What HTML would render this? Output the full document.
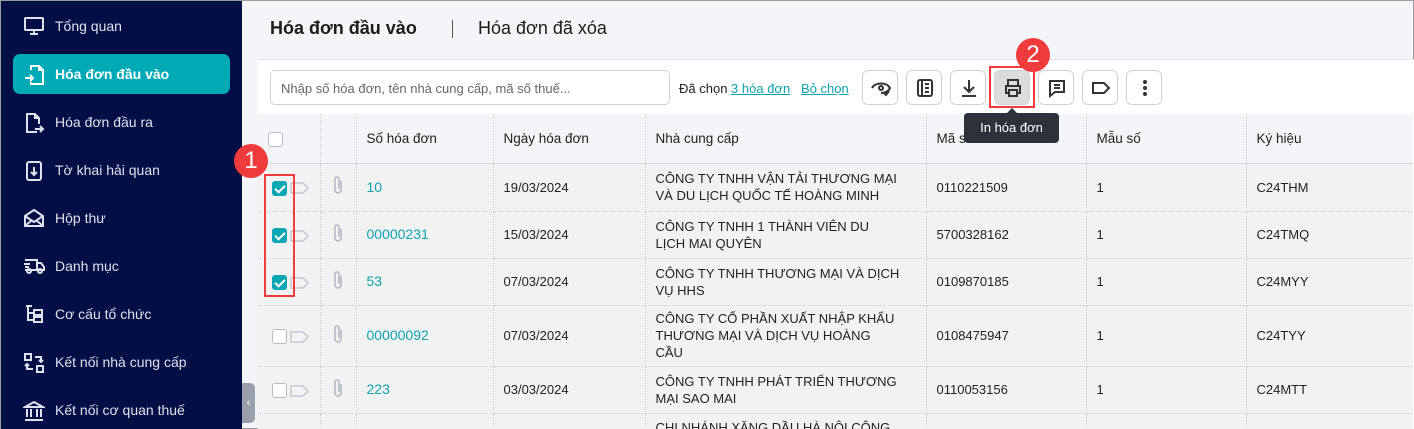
<!DOCTYPE html>
<html style="overflow:hidden"><head><meta charset="utf-8"><style>
*{box-sizing:border-box;margin:0;padding:0}
html,body{width:1414px;height:429px;overflow:hidden}
body{font-family:"Liberation Sans",sans-serif;background:#f4f5f8;position:relative;border:1px solid #9a9a9a}
.sb{position:absolute;left:0;top:0;width:241px;height:429px;background:#030d46}
.it{position:absolute;left:12px;width:217px;height:40px;color:#dfe2ec;font-size:14px;display:flex;align-items:center;padding-left:42px}
.it svg{position:absolute;left:10px;top:10px}
.it.act{background:#00a9b6;border-radius:7px;font-weight:bold;color:#fff}
.tab{position:absolute;top:17px;font-size:18px;color:#1c1c1c}
.card{position:absolute;left:257px;top:58px;width:1156px;height:371px;background:#fff;border-top:1px solid #e4e4e8}
.search{position:absolute;left:269px;top:69px;width:400px;height:35px;border:1px solid #cfd2d8;border-radius:5px;font-size:13px;color:#666;padding:10px 0 0 10px}
.btn{position:absolute;top:69px;width:36px;height:35px;border:1px solid #cfd2d8;border-radius:6px;background:#fff}
.btn svg{position:absolute;left:8px;top:7px}
table{position:absolute;left:257px;top:113px;border-collapse:collapse;font-size:13px;color:#222;table-layout:fixed;width:1155px}
td{border-right:1px dotted #c9cbd0;border-bottom:1px dotted #c9cbd0;padding:0 10px;vertical-align:middle;background:#f2f2f2;line-height:17px;overflow:hidden;white-space:nowrap}
tr.h td{background:#f4f5f8;height:49px;border-bottom:1px solid #d2d5dc;font-size:13.5px}
.lnk{color:#0fa2b0;font-size:14px}
.cb{display:inline-block;width:15px;height:15px;border:1.5px solid #b8bcc4;border-radius:3px;background:#fff;vertical-align:middle}
.cb.on{background:#0aa6b3;border-color:#0aa6b3;position:relative}
.cb.on:after{content:"";position:absolute;left:4px;top:1px;width:4px;height:8px;border:solid #fff;border-width:0 2px 2px 0;transform:rotate(45deg)}
.tag{display:inline-block;vertical-align:middle;margin-left:3px}
.badge{position:absolute;width:34px;height:34px;border-radius:50%;background:#ef3b3b;color:#fff;font-size:24px;text-align:center;line-height:34px}
</style></head><body>
<div class="sb">
<div class="it" style="top:5px"><svg width="22" height="20" fill="none" stroke="#dfe2ec" stroke-width="2"><rect x="2" y="2" width="18" height="12" rx="1"/><path d="M7 18h8M11 14v4"/></svg>Tổng quan</div>
<div class="it act" style="top:53px"><svg width="22" height="22" fill="none" stroke="#fff" stroke-width="2"><path d="M8 6V2h8l4 4v14H8v-2M16 2v4h4M2 14h8M7 11l3 3-3 3"/></svg>Hóa đơn đầu vào</div>
<div class="it" style="top:101px"><svg width="22" height="22" fill="none" stroke="#dfe2ec" stroke-width="2"><path d="M14 20H4V2h8l4 4v6M12 2v4h4M12 17h8M17 14l3 3-3 3"/></svg>Hóa đơn đầu ra</div>
<div class="it" style="top:149px"><svg width="22" height="22" fill="none" stroke="#dfe2ec" stroke-width="2"><rect x="4" y="2" width="14" height="18" rx="2"/><path d="M11 7v8M8 12l3 3 3-3"/></svg>Tờ khai hải quan</div>
<div class="it" style="top:197px"><svg width="22" height="20" fill="none" stroke="#dfe2ec" stroke-width="2"><path d="M2 8l9-6 9 6v10H2zM2 8l9 6 9-6M2 18l7-6M20 18l-7-6"/></svg>Hộp thư</div>
<div class="it" style="top:245px"><svg width="22" height="20" fill="none" stroke="#dfe2ec" stroke-width="2"><path d="M2 4h12v10H2M14 7h4l3 4v3h-7M1 8h6M2 11h4"/><circle cx="6" cy="15" r="2"/><circle cx="17" cy="15" r="2"/></svg>Danh mục</div>
<div class="it" style="top:293px"><svg width="22" height="20" fill="none" stroke="#dfe2ec" stroke-width="2"><path d="M3 2h6M5 2v14h6M5 9h6"/><rect x="11" y="6" width="8" height="5"/><rect x="11" y="13" width="8" height="5"/></svg>Cơ cấu tổ chức</div>
<div class="it" style="top:341px"><svg width="22" height="22" fill="none" stroke="#dfe2ec" stroke-width="2"><rect x="2" y="2" width="6" height="6"/><rect x="14" y="14" width="6" height="6"/><path d="M12 5h6v5M16 8l2 2 2-2M10 17H4v-5M2 14l2-2 2 2"/></svg>Kết nối nhà cung cấp</div>
<div class="it" style="top:389px"><svg width="22" height="22" fill="none" stroke="#dfe2ec" stroke-width="2"><path d="M2 7l9-5 9 5zM4 9v8M8 9v8M14 9v8M18 9v8M2 20h18"/></svg>Kết nối cơ quan thuế</div>
</div>
<div style="position:absolute;left:241px;top:382px;width:13px;height:40px;background:#9aa0ab;border-radius:0 5px 5px 0;color:#fff;font-size:11px;text-align:center;line-height:40px">‹</div>
<div class="tab" style="left:269px;font-weight:bold">Hóa đơn đầu vào</div>
<div style="position:absolute;left:451px;top:19px;width:1px;height:18px;background:#555"></div>
<div class="tab" style="left:477px">Hóa đơn đã xóa</div>
<div class="card"></div>
<div class="search">Nhập số hóa đơn, tên nhà cung cấp, mã số thuế...</div>
<div style="position:absolute;left:678px;top:80px;font-size:13px;color:#222">Đã chọn <span style="color:#0fa2b0;text-decoration:underline">3 hóa đơn</span>&nbsp;&nbsp;&nbsp;<span style="color:#0fa2b0;text-decoration:underline">Bỏ chọn</span></div>
<div class="btn" style="left:861px"><svg width="20" height="20" fill="none" stroke="#333" stroke-width="2"><path d="M1 10c3-6 15-6 18 0-2 4-6 5-9 5"/><circle cx="10" cy="10" r="2"/><path d="M13 15l2 2 3-4"/></svg></div>
<div class="btn" style="left:905px"><svg width="20" height="20" fill="none" stroke="#333" stroke-width="2"><rect x="3" y="2" width="14" height="16" rx="2"/><path d="M7 2v16M10 6h4M10 10h4M10 14h4"/></svg></div>
<div class="btn" style="left:949px"><svg width="20" height="20" fill="none" stroke="#333" stroke-width="2"><path d="M10 2v11M5 9l5 5 5-5M3 18h14"/></svg></div>
<div class="btn" style="left:993px;background:#dcdcdc"><svg width="20" height="20" fill="none" stroke="#333" stroke-width="2"><path d="M5 7V2h10v5M5 15H3V8h14v7h-2"/><rect x="6" y="12" width="8" height="6"/></svg></div>
<div style="position:absolute;left:988px;top:65px;width:46px;height:42px;border:2px solid #ee3b3b"></div>
<div class="btn" style="left:1037px"><svg width="20" height="20" fill="none" stroke="#333" stroke-width="2"><path d="M3 3h14v11H8l-5 4z M7 7h6M7 10h6"/></svg></div>
<div class="btn" style="left:1081px"><svg width="20" height="20" fill="none" stroke="#333" stroke-width="2"><path d="M2 5h11l5 5-5 5H2z"/></svg></div>
<div class="btn" style="left:1125px"><svg width="20" height="20" fill="#333"><circle cx="10" cy="4" r="2"/><circle cx="10" cy="10" r="2"/><circle cx="10" cy="16" r="2"/></svg></div>
<table>
<colgroup><col style="width:62px"><col style="width:36px"><col style="width:137px"><col style="width:152px"><col style="width:281px"><col style="width:160px"><col style="width:160px"><col style="width:167px"></colgroup>
<tr class="h"><td><span class="cb"></span></td><td></td><td>Số hóa đơn</td><td>Ngày hóa đơn</td><td>Nhà cung cấp</td><td>Mã số thuế</td><td>Mẫu số</td><td style="border-right:none">Ký hiệu</td></tr>
<tr style="height:48px"><td style="padding-left:14px"><span class="cb on"></span><svg class="tag" width="20" height="14" fill="none" stroke="#c5c8cf" stroke-width="1.5"><path d="M1 2h12l5 5-5 5H1z"/></svg></td><td><svg width="14" height="20" fill="none" stroke="#b5b9c2" stroke-width="1.6"><path d="M10 6v9a3 3 0 0 1-6 0V4a2 2 0 0 1 4 0v10"/></svg></td><td class="lnk">10</td><td>19/03/2024</td><td>CÔNG TY TNHH VẬN TẢI THƯƠNG MẠI<br>VÀ DU LỊCH QUỐC TẾ HOÀNG MINH</td><td>0110221509</td><td>1</td><td style="border-right:none">C24THM</td></tr>
<tr style="height:47px"><td style="padding-left:14px"><span class="cb on"></span><svg class="tag" width="20" height="14" fill="none" stroke="#c5c8cf" stroke-width="1.5"><path d="M1 2h12l5 5-5 5H1z"/></svg></td><td><svg width="14" height="20" fill="none" stroke="#b5b9c2" stroke-width="1.6"><path d="M10 6v9a3 3 0 0 1-6 0V4a2 2 0 0 1 4 0v10"/></svg></td><td class="lnk">00000231</td><td>15/03/2024</td><td>CÔNG TY TNHH 1 THÀNH VIÊN DU<br>LỊCH MAI QUYÊN</td><td>5700328162</td><td>1</td><td style="border-right:none">C24TMQ</td></tr>
<tr style="height:47px"><td style="padding-left:14px"><span class="cb on"></span><svg class="tag" width="20" height="14" fill="none" stroke="#c5c8cf" stroke-width="1.5"><path d="M1 2h12l5 5-5 5H1z"/></svg></td><td><svg width="14" height="20" fill="none" stroke="#b5b9c2" stroke-width="1.6"><path d="M10 6v9a3 3 0 0 1-6 0V4a2 2 0 0 1 4 0v10"/></svg></td><td class="lnk">53</td><td>07/03/2024</td><td>CÔNG TY TNHH THƯƠNG MẠI VÀ DỊCH<br>VỤ HHS</td><td>0109870185</td><td>1</td><td style="border-right:none">C24MYY</td></tr>
<tr style="height:61px"><td style="padding-left:14px"><span class="cb"></span><svg class="tag" width="20" height="14" fill="none" stroke="#c5c8cf" stroke-width="1.5"><path d="M1 2h12l5 5-5 5H1z"/></svg></td><td><svg width="14" height="20" fill="none" stroke="#b5b9c2" stroke-width="1.6"><path d="M10 6v9a3 3 0 0 1-6 0V4a2 2 0 0 1 4 0v10"/></svg></td><td class="lnk">00000092</td><td>07/03/2024</td><td>CÔNG TY CỔ PHẦN XUẤT NHẬP KHẨU<br>THƯƠNG MẠI VÀ DỊCH VỤ HOÀNG<br>CẦU</td><td>0108475947</td><td>1</td><td style="border-right:none">C24TYY</td></tr>
<tr style="height:47px"><td style="padding-left:14px"><span class="cb"></span><svg class="tag" width="20" height="14" fill="none" stroke="#c5c8cf" stroke-width="1.5"><path d="M1 2h12l5 5-5 5H1z"/></svg></td><td><svg width="14" height="20" fill="none" stroke="#b5b9c2" stroke-width="1.6"><path d="M10 6v9a3 3 0 0 1-6 0V4a2 2 0 0 1 4 0v10"/></svg></td><td class="lnk">223</td><td>03/03/2024</td><td>CÔNG TY TNHH PHÁT TRIỂN THƯƠNG<br>MẠI SAO MAI</td><td>0110053156</td><td>1</td><td style="border-right:none">C24MTT</td></tr>
<tr style="height:30px"><td></td><td></td><td></td><td></td><td style="vertical-align:top;padding-top:5px">CHI NHÁNH XĂNG DẦU HÀ NỘI CÔNG</td><td></td><td></td><td style="border-right:none"></td></tr>
</table>
<div style="position:absolute;left:263px;top:173px;width:31px;height:123px;border:2px solid #ee3b3b"></div>
<div class="badge" style="left:233px;top:143px">1</div>
<div class="badge" style="left:1015px;top:37px">2</div>
<div style="position:absolute;left:963px;top:112px;width:95px;height:30px;background:#2c313c;border-radius:4px;color:#fff;font-size:13px;text-align:center;line-height:30px">In hóa đơn</div>
<div style="position:absolute;left:1005px;top:107px;border:6px solid transparent;border-top:none;border-bottom:6px solid #2c313c"></div>
</body></html>
